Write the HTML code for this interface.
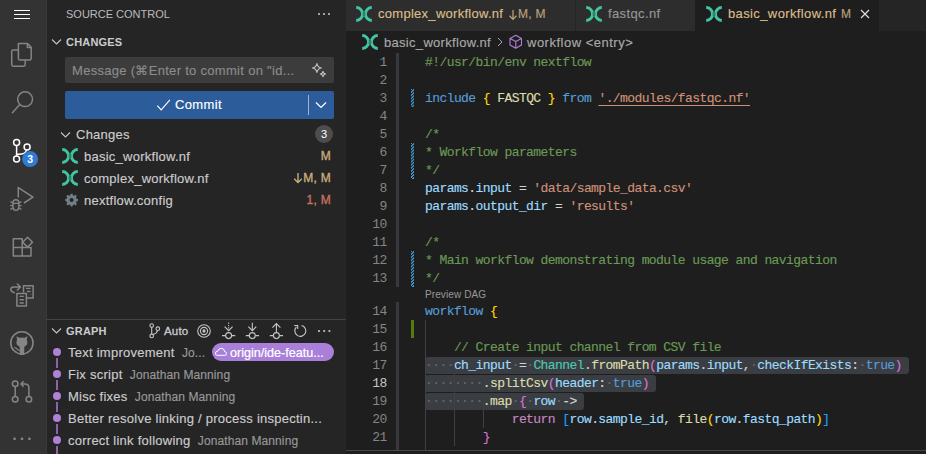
<!DOCTYPE html>
<html><head><meta charset="utf-8">
<style>
*{box-sizing:border-box;margin:0;padding:0}
html,body{width:926px;height:454px;overflow:hidden;background:#1e1e1e;font-family:"Liberation Sans",sans-serif;}
.abs{position:absolute}
#act{position:absolute;left:0;top:0;width:46px;height:454px;background:#333333}
#side{position:absolute;left:46px;top:0;width:300px;height:454px;background:#252526;border-left:1px solid #383838}
#ed{position:absolute;left:346px;top:0;width:580px;height:454px;background:#1e1e1e}
.t13{font-size:13px;letter-spacing:0.25px;color:#cccccc;white-space:nowrap;line-height:22px;-webkit-text-stroke:0.15px currentColor}
.hdr{font-size:11px;font-weight:bold;color:#cccccc;letter-spacing:0.2px;line-height:22px}
svg{position:absolute;overflow:visible}
.code{position:absolute;left:425px;font-family:"Liberation Mono",monospace;font-size:13px;letter-spacing:-0.58px;line-height:18px;white-space:pre;color:#d4d4d4;padding-top:1px;-webkit-text-stroke:0.15px currentColor}
.ln{position:absolute;left:346px;width:40.6px;text-align:right;font-family:"Liberation Mono",monospace;font-size:13px;letter-spacing:-0.6px;line-height:18px;color:#858585;padding-top:1px}
.c{color:#6a9955}.k{color:#569cd6}.s{color:#ce9178}.v{color:#9cdcfe}.f{color:#dcdcaa}.cl{color:#4ec9b0}
.b1{color:#ffd700}.b2{color:#da70d6}.b3{color:#179fff}.r{color:#c586c0}.w{color:#d4d4d4}
.dot{color:#686868}
.dec{font-size:12px;-webkit-text-stroke:0.35px currentColor;letter-spacing:0.3px}
</style></head><body>

<!-- Activity bar -->
<div id="act">
  <!-- hamburger -->
  <div class="abs" style="left:14px;top:10px;width:16px;height:1px;background:#ffffff"></div>
  <div class="abs" style="left:14px;top:14px;width:16px;height:1px;background:#ffffff"></div>
  <div class="abs" style="left:14px;top:18px;width:16px;height:1px;background:#ffffff"></div>

  <!-- files -->
  <svg style="left:0;top:0" width="46" height="454" viewBox="0 0 46 454">
   <g fill="none" stroke="#858585" stroke-width="1.5" stroke-linejoin="round">
    <path d="M18.4 43.6 H27.6 L31.2 47.2 V58.4 Q31.2 60 29.6 60 H20 Q18.4 60 18.4 58.4 Z"/>
    <path d="M27.4 43.8 V47.4 H31"/>
    <path d="M18.4 50 H13.3 Q11.7 50 11.7 51.6 V64.6 Q11.7 66.2 13.3 66.2 H23.6 Q25.2 66.2 25.2 64.6 V60"/>
    <!-- search -->
    <circle cx="25.1" cy="99.2" r="7.4"/>
    <path d="M19.8 104.6 L12.4 112.8" stroke-linecap="round"/>
    <!-- debug -->
    <path d="M18.3 197.6 V187.6 L33 197.1 L23.9 203"/>
    <path d="M12.9 203.4 Q12.9 199.8 15.9 199.8 Q18.9 199.8 18.9 203.4 V206.2 Q18.9 210.3 15.9 210.3 Q12.9 210.3 12.9 206.2 Z"/>
    <path d="M13 203.3 H18.8 M10.4 201.6 L13 203 M21.4 201.6 L18.8 203 M10.2 205.6 H13 M21.6 205.6 H18.8 M10.4 209.4 L13 208 M21.4 209.4 L18.8 208" stroke-width="1.2"/>
    <!-- extensions -->
    <path d="M13.3 238.7 H22.2 V256 H13.3 Z M13.3 247.4 H31 V256 H22.2"/>
    <path d="M27.6 237.3 L32.5 242.2 L27.6 247.1 L22.7 242.2 Z"/>
    <!-- remote docs -->
    <path d="M16.9 293.4 H26.4 V306.1 H16.9 Z"/>
    <path d="M19.6 296.4 H23.8 M19.6 299.8 H23.8 M19.6 303 H23.8" stroke-width="1.4"/>
    <path d="M23.5 292.5 V285.7 H33.1 V298 H27"/>
    <path d="M26 288.4 H30.6 M27 291.5 H30.6 M30.6 294.5 V295" stroke-width="1.4"/>
    <path d="M14.3 292.8 Q10.8 291.5 10.8 289.6 Q10.8 287 13.6 287 H20 M17.4 284 L20.4 287 L17.4 290" stroke-linecap="round"/>
    <!-- github ring -->
    <circle cx="21.9" cy="342.9" r="11.1" stroke-width="1.6"/>
    <!-- PR -->
    <circle cx="15.2" cy="383.8" r="2.8"/>
    <circle cx="15.2" cy="399.3" r="2.8"/>
    <circle cx="28.9" cy="399.3" r="2.8"/>
    <path d="M15.2 386.6 V396.5"/>
    <path d="M28.9 396.5 V388 Q28.9 384 25 384 H21.3 M23.6 381.2 L21 384 L23.6 386.8"/>
   </g>
   <!-- github cat -->
   <g fill="#858585">
    <ellipse cx="21.9" cy="342.4" rx="5.5" ry="4.9"/>
    <path d="M16.5 336.3 L17.2 341 L20.2 338.3 Z M27.3 336.3 L26.6 341 L23.6 338.3 Z"/>
    <path d="M19.7 345 H24.3 V355 H19.7 Z"/>
   </g>
   <path d="M14.4 347.3 Q16.2 347.6 17.1 349 Q18 350.4 19.8 350.3" fill="none" stroke="#858585" stroke-width="1.3"/>
   <!-- SCM active -->
   <g fill="none" stroke="#ffffff" stroke-width="1.5">
    <circle cx="16.6" cy="142.6" r="3"/>
    <circle cx="16.6" cy="159.1" r="3"/>
    <circle cx="27.1" cy="147.1" r="3"/>
    <path d="M16.6 145.6 V156.1"/>
    <path d="M26.5 150.1 Q25.5 154.2 19 154.2 H16.6"/>
   </g>
   <circle cx="30.1" cy="159.1" r="8" fill="#2f7bd4"/>
   <text x="30.1" y="162.9" text-anchor="middle" font-family="Liberation Sans" font-weight="bold" font-size="10.5" fill="#fff">3</text>
   <!-- more -->
   <circle cx="14.6" cy="438.8" r="1.4" fill="#858585"/>
   <circle cx="22" cy="438.8" r="1.4" fill="#858585"/>
   <circle cx="29.4" cy="438.8" r="1.4" fill="#858585"/>
  </svg>
</div>

<!-- Sidebar -->
<div id="side"></div>
<div class="abs" style="left:66px;top:3px;font-size:11px;color:#bbbbbb;line-height:22px;letter-spacing:0px">SOURCE CONTROL</div>
<div class="abs" style="left:317px;top:13px;width:16px;height:3px">
  <div class="abs" style="left:1px;top:0;width:2px;height:2px;background:#ccc;border-radius:1px"></div>
  <div class="abs" style="left:6px;top:0;width:2px;height:2px;background:#ccc;border-radius:1px"></div>
  <div class="abs" style="left:11px;top:0;width:2px;height:2px;background:#ccc;border-radius:1px"></div>
</div>
<!-- CHANGES header -->
<svg style="left:51px;top:38px" width="11" height="8" viewBox="0 0 11 8"><path d="M1 1.5 L5.5 6 L10 1.5" fill="none" stroke="#c5c5c5" stroke-width="1.1"/></svg>
<div class="abs hdr" style="left:66px;top:31px">CHANGES</div>

<!-- input -->
<div class="abs" style="left:65px;top:57px;width:269px;height:26px;background:#3c3c3c;border-radius:2px"></div>
<div class="abs t13" style="left:72px;top:60px;color:#8b8b8b;letter-spacing:0.3px">Message (⌘Enter to commit on "id...</div>

<!-- commit button -->
<div class="abs" style="left:65px;top:91px;width:269px;height:28px;background:#2c5d9a;border-radius:2px"></div>
<svg style="left:156px;top:98px" width="16" height="14" viewBox="0 0 16 14"><path d="M1.3 7.6 L5.2 11.9 L13.9 1.9" fill="none" stroke="#ffffff" stroke-width="1.1"/></svg>
<div class="abs t13" style="left:175px;top:94px;color:#ffffff;font-size:13px;-webkit-text-stroke:0.15px #fff;letter-spacing:0.35px">Commit</div>
<div class="abs" style="left:308px;top:95px;width:1px;height:20px;background:#9fb4d0"></div>
<svg style="left:315px;top:101px" width="12" height="8" viewBox="0 0 12 8"><path d="M1 1.5 L6 6.5 L11 1.5" fill="none" stroke="#ffffff" stroke-width="1.2"/></svg>

<!-- Changes row -->
<svg style="left:60px;top:131px" width="11" height="8" viewBox="0 0 11 8"><path d="M1 1.5 L5.5 6 L10 1.5" fill="none" stroke="#c5c5c5" stroke-width="1.1"/></svg>
<div class="abs t13" style="left:76px;top:124px">Changes</div>
<div class="abs" style="left:315px;top:125px;width:18px;height:18px;border-radius:9px;background:#4d4d4d;color:#fff;font-size:11px;line-height:18px;text-align:center">3</div>

<!-- file rows -->
<div class="abs t13" style="left:84px;top:146px">basic_workflow.nf</div>
<div class="abs t13" style="left:84px;top:168px">complex_workflow.nf</div>
<div class="abs t13" style="left:84px;top:190px">nextflow.config</div>
<div class="abs t13 dec" style="left:300px;top:145px;width:31px;text-align:right;color:#c9ac7a">M</div>
<div class="abs t13 dec" style="left:270px;top:167px;width:61px;text-align:right;color:#c9ac7a">M, M</div>
<svg style="left:293px;top:172px" width="10" height="12" viewBox="0 0 10 12"><path d="M5 1 V10.5 M1.2 6.8 L5 10.6 L8.8 6.8" fill="none" stroke="#c9ac7a" stroke-width="1.4"/></svg>
<div class="abs t13 dec" style="left:270px;top:189px;width:61px;text-align:right;color:#c8705f">1, M</div>

<svg style="left:62px;top:148px" width="16" height="16" viewBox="0 0 16 16"><path d="M0.2 1.6 A6.4 6.4 0 0 1 0.2 14.4 M15.8 1.6 A6.4 6.4 0 0 0 15.8 14.4" fill="none" stroke="#42c6a2" stroke-width="3"/><rect x="6.6" y="6.2" width="2.8" height="3.6" fill="#202020" opacity="0.4"/></svg>
<svg style="left:62px;top:170px" width="16" height="16" viewBox="0 0 16 16"><path d="M0.2 1.6 A6.4 6.4 0 0 1 0.2 14.4 M15.8 1.6 A6.4 6.4 0 0 0 15.8 14.4" fill="none" stroke="#42c6a2" stroke-width="3"/><rect x="6.6" y="6.2" width="2.8" height="3.6" fill="#202020" opacity="0.4"/></svg>
<svg style="left:64px;top:192px" width="16" height="16" viewBox="0 0 16 16"><g transform="translate(7.6 8.1)"><path fill="#6e7f86" fill-rule="evenodd" d="M-1 -5.6 H1 L1.3 -4.1 L2.6 -3.6 L3.9 -4.5 L5.3 -3.1 L4.4 -1.8 L4.9 -0.5 L6.4 -0.2 V1.8 L4.9 2.1 L4.4 3.4 L5.3 4.7 L3.9 6.1 L2.6 5.2 L1.3 5.7 L1 7.2 H-1 L-1.3 5.7 L-2.6 5.2 L-3.9 6.1 L-5.3 4.7 L-4.4 3.4 L-4.9 2.1 L-6.4 1.8 V-0.2 L-4.9 -0.5 L-4.4 -1.8 L-5.3 -3.1 L-3.9 -4.5 L-2.6 -3.6 L-1.3 -4.1 Z M0 -1.2 A2 2 0 1 0 0.01 -1.2 Z" transform="translate(0 -0.8)"/></g></svg>
<svg style="left:306px;top:58px" width="26" height="26" viewBox="0 0 26 26"><g fill="none" stroke="#c5c5c5" stroke-width="1.1" stroke-linejoin="round"><path d="M10.9 5.6 Q11.6 9.3 15.3 10 Q11.6 10.7 10.9 14.4 Q10.2 10.7 6.5 10 Q10.2 9.3 10.9 5.6 Z"/><path d="M17 13.4 Q17.4 15.6 19.6 16 Q17.4 16.4 17 18.6 Q16.6 16.4 14.4 16 Q16.6 15.6 17 13.4 Z"/></g></svg>
<svg style="left:140px;top:318px" width="200" height="26" viewBox="140 318 200 26"><g fill="none" stroke="#c5c5c5" stroke-width="1.1">
   <circle cx="151.7" cy="325.6" r="1.8"/><circle cx="151.7" cy="335.9" r="1.8"/><circle cx="157.8" cy="328.7" r="1.8"/>
   <path d="M151.7 327.4 V334.1 M157.6 330.5 Q157 333.2 153 334.6"/>
   <circle cx="204" cy="331" r="6.3"/><circle cx="204" cy="331" r="3.6"/><circle cx="204" cy="331" r="1.1" fill="#c5c5c5"/>
   <path d="M228.6 322.5 V331" stroke-dasharray="1.2 1.2"/><path d="M224.6 326.6 L228.6 330.6 L232.6 326.6"/>
   <circle cx="228.6" cy="335.6" r="3"/><path d="M222 335.6 H225.6 M231.6 335.6 H235.2"/>
   <path d="M252.3 322.8 V331"/><path d="M248.3 326.6 L252.3 330.6 L256.3 326.6"/>
   <circle cx="252.3" cy="335.6" r="3"/><path d="M245.8 335.6 H249.3 M255.3 335.6 H259"/>
   <path d="M276.4 323.6 V332.4"/><path d="M272.4 327.6 L276.4 323.6 L280.4 327.6"/>
   <circle cx="276.4" cy="335.6" r="3"/><path d="M269.8 335.6 H273.4 M279.4 335.6 H283"/>
   <path d="M301.6 325.5 A5.5 5.5 0 1 1 296.4 327"/><path d="M294.2 325.5 H297.7 V329"/>
  </g>
  <circle cx="319" cy="331" r="1.1" fill="#c5c5c5"/><circle cx="324.2" cy="331" r="1.1" fill="#c5c5c5"/><circle cx="329.4" cy="331" r="1.1" fill="#c5c5c5"/>
 </svg>
<!-- graph separator -->
<div class="abs" style="left:46px;top:319px;width:300px;height:1px;background:#434343"></div>
<svg style="left:51px;top:327px" width="11" height="8" viewBox="0 0 11 8"><path d="M1 1.5 L5.5 6 L10 1.5" fill="none" stroke="#c5c5c5" stroke-width="1.1"/></svg>
<div class="abs hdr" style="left:66px;top:320px">GRAPH</div>
<div class="abs t13" style="left:164px;top:320px;font-size:11.5px;-webkit-text-stroke:0.3px #ccc;letter-spacing:0.2px">Auto</div>

<!-- graph rows -->
<div class="abs" style="left:56px;top:358px;width:2px;height:10px;background:#8a63ad"></div><div class="abs" style="left:56px;top:380px;width:2px;height:10px;background:#8a63ad"></div><div class="abs" style="left:56px;top:402px;width:2px;height:10px;background:#8a63ad"></div><div class="abs" style="left:56px;top:424px;width:2px;height:10px;background:#8a63ad"></div><div class="abs" style="left:56px;top:446px;width:2px;height:10px;background:#8a63ad"></div>
<div class="abs" style="left:53px;top:348px;width:8px;height:8px;border-radius:4px;background:#b180d7"></div>
<div class="abs" style="left:53px;top:370px;width:8px;height:8px;border-radius:4px;background:#b180d7"></div>
<div class="abs" style="left:53px;top:392px;width:8px;height:8px;border-radius:4px;background:#b180d7"></div>
<div class="abs" style="left:53px;top:414px;width:8px;height:8px;border-radius:4px;background:#b180d7"></div>
<div class="abs" style="left:53px;top:436px;width:8px;height:8px;border-radius:4px;background:#b180d7"></div>
<div class="abs t13" style="left:68px;top:342px">Text improvement <span style="font-size:12px;color:#999;letter-spacing:0.1px">&nbsp;Jo...</span></div>
<div class="abs t13" style="left:68px;top:364px">Fix script <span style="font-size:12px;color:#999;letter-spacing:0.1px">&nbsp;Jonathan Manning</span></div>
<div class="abs t13" style="left:68px;top:386px">Misc fixes <span style="font-size:12px;color:#999;letter-spacing:0.1px">&nbsp;Jonathan Manning</span></div>
<div class="abs t13" style="left:68px;top:408px">Better resolve linking / process inspectin...</div>
<div class="abs t13" style="left:68px;top:430px">correct link following <span style="font-size:12px;color:#999;letter-spacing:0.1px">&nbsp;Jonathan Manning</span></div>
<div class="abs" style="left:212px;top:343px;width:122px;height:18px;border-radius:9px;background:#a97fd9"></div>
<svg style="left:214px;top:346px" width="14" height="11" viewBox="0 0 14 11"><path d="M3.2 9.3 H10.8 Q12.6 9.3 12.6 7.5 Q12.6 5.8 10.6 5.6 Q10.4 2.3 7.2 2.3 Q4.5 2.3 3.9 5 Q1.4 5.3 1.4 7.3 Q1.4 9.3 3.2 9.3 Z" fill="none" stroke="#fff" stroke-width="1"/></svg>
<div class="abs t13" style="left:230px;top:342px;color:#fff;font-size:12.6px;letter-spacing:0px;-webkit-text-stroke:0.2px #fff">origin/ide-featu...</div>

<!-- Editor -->
<div id="ed"></div>
<div class="abs" style="left:346px;top:0;width:580px;height:31px;background:#252526"></div>
<div class="abs" style="left:346px;top:0;width:229px;height:31px;background:#2d2d2d"></div>
<div class="abs" style="left:576px;top:0;width:119px;height:31px;background:#2d2d2d"></div>
<div class="abs" style="left:695px;top:0;width:184px;height:31px;background:#1e1e1e"></div>
<div class="abs t13" style="left:378px;top:3px;color:#d9bd8a;letter-spacing:0.28px">complex_workflow.nf</div>
<svg style="left:508px;top:9px" width="10" height="12" viewBox="0 0 10 12"><path d="M5 1 V10.3 M1.5 6.8 L5 10.4 L8.5 6.8" fill="none" stroke="#b89f75" stroke-width="1.3"/></svg>
<div class="abs t13 dec" style="left:518px;top:3px;color:#b89f75;-webkit-text-stroke:0.2px currentColor">M, M</div>
<div class="abs t13" style="left:608px;top:3px;color:#969696;letter-spacing:0.38px">fastqc.nf</div>
<div class="abs t13" style="left:728px;top:3px;color:#d9bd8a;letter-spacing:0.38px">basic_workflow.nf</div>
<div class="abs t13 dec" style="left:841px;top:3px;color:#b89f75;-webkit-text-stroke:0.2px currentColor">M</div>
<svg style="left:860px;top:9px" width="10" height="10" viewBox="0 0 10 10"><path d="M1 1L9 9M9 1L1 9" stroke="#ddd" stroke-width="1.2"/></svg>

<svg style="left:356px;top:6px" width="16" height="16" viewBox="0 0 16 16"><path d="M0.2 1.6 A6.4 6.4 0 0 1 0.2 14.4 M15.8 1.6 A6.4 6.4 0 0 0 15.8 14.4" fill="none" stroke="#42c6a2" stroke-width="3"/><rect x="6.6" y="6.2" width="2.8" height="3.6" fill="#202020" opacity="0.4"/></svg>
<svg style="left:586px;top:6px" width="16" height="16" viewBox="0 0 16 16"><path d="M0.2 1.6 A6.4 6.4 0 0 1 0.2 14.4 M15.8 1.6 A6.4 6.4 0 0 0 15.8 14.4" fill="none" stroke="#42c6a2" stroke-width="3"/><rect x="6.6" y="6.2" width="2.8" height="3.6" fill="#202020" opacity="0.4"/></svg>
<svg style="left:706px;top:6px" width="16" height="16" viewBox="0 0 16 16"><path d="M0.2 1.6 A6.4 6.4 0 0 1 0.2 14.4 M15.8 1.6 A6.4 6.4 0 0 0 15.8 14.4" fill="none" stroke="#42c6a2" stroke-width="3"/><rect x="6.6" y="6.2" width="2.8" height="3.6" fill="#202020" opacity="0.4"/></svg>
<svg style="left:362px;top:34px" width="16" height="16" viewBox="0 0 16 16"><path d="M0.2 1.6 A6.4 6.4 0 0 1 0.2 14.4 M15.8 1.6 A6.4 6.4 0 0 0 15.8 14.4" fill="none" stroke="#42c6a2" stroke-width="3"/><rect x="6.6" y="6.2" width="2.8" height="3.6" fill="#202020" opacity="0.4"/></svg>
<svg style="left:505px;top:32px" width="20" height="20" viewBox="505 32 20 20"><g fill="none" stroke="#b180d7" stroke-width="1.1" stroke-linejoin="round"><path d="M515.8 35.3 L521.5 38.6 V45 L515.8 48.3 L510 45 V38.6 Z"/><path d="M510 38.6 L515.8 41.6 L521.5 38.6 M515.8 41.6 V48.3"/></g></svg>
<!-- breadcrumbs -->
<div class="abs t13" style="left:384px;top:32px;color:#a9a9a9;letter-spacing:0.3px">basic_workflow.nf</div>
<svg style="left:497px;top:37px" width="6" height="10" viewBox="0 0 6 10"><path d="M1 1L5 5L1 9" fill="none" stroke="#a9a9a9" stroke-width="1"/></svg>
<div class="abs t13" style="left:527px;top:32px;color:#a9a9a9;letter-spacing:0.5px">workflow &lt;entry&gt;</div>

<!-- line numbers -->
<!-- GUTTER -->
<div class="abs" style="left:396px;top:53px;width:3px;height:234px;background:#39393d"></div>
<div class="abs" style="left:396px;top:302px;width:3px;height:148px;background:#39393d"></div>
<div class="abs" style="left:411px;top:89px;width:3px;height:18px;background:repeating-linear-gradient(135deg,#3d95cc 0px,#3d95cc 1.1px,#1e1e1e 1.4px,#1e1e1e 1.9px,#3d95cc 2.15px)"></div>
<div class="abs" style="left:411px;top:143px;width:3px;height:36px;background:repeating-linear-gradient(135deg,#3d95cc 0px,#3d95cc 1.1px,#1e1e1e 1.4px,#1e1e1e 1.9px,#3d95cc 2.15px)"></div>
<div class="abs" style="left:411px;top:251px;width:3px;height:36px;background:repeating-linear-gradient(135deg,#3d95cc 0px,#3d95cc 1.1px,#1e1e1e 1.4px,#1e1e1e 1.9px,#3d95cc 2.15px)"></div>
<div class="abs" style="left:411px;top:320px;width:3px;height:18px;background:#587c0c"></div>
<div class="abs" style="left:425px;top:357px;width:484px;height:17px;background:#3a3d41;border-radius:3px"></div>
<div class="abs" style="left:425px;top:375px;width:231px;height:17px;background:#3a3d41;border-radius:3px"></div>
<div class="abs" style="left:425px;top:393px;width:159px;height:17px;background:#3a3d41;border-radius:3px"></div>
<div class="abs" style="left:425px;top:320px;width:1px;height:144px;background:#404040"></div>
<div class="abs" style="left:454px;top:374px;width:1px;height:72px;background:#404040"></div>
<div class="abs" style="left:483px;top:410px;width:1px;height:18px;background:#404040"></div>
<div class="abs" style="left:425px;top:287px;font-size:10px;line-height:15px;color:#999999;letter-spacing:0.1px">Preview DAG</div>
<!-- /GUTTER -->
<!-- CODEGEN -->
<div class="ln" style="top:53px;color:#858585">1</div>
<div class="ln" style="top:71px;color:#858585">2</div>
<div class="ln" style="top:89px;color:#858585">3</div>
<div class="ln" style="top:107px;color:#858585">4</div>
<div class="ln" style="top:125px;color:#858585">5</div>
<div class="ln" style="top:143px;color:#858585">6</div>
<div class="ln" style="top:161px;color:#858585">7</div>
<div class="ln" style="top:179px;color:#858585">8</div>
<div class="ln" style="top:197px;color:#858585">9</div>
<div class="ln" style="top:215px;color:#858585">10</div>
<div class="ln" style="top:233px;color:#858585">11</div>
<div class="ln" style="top:251px;color:#858585">12</div>
<div class="ln" style="top:269px;color:#858585">13</div>
<div class="ln" style="top:302px;color:#858585">14</div>
<div class="ln" style="top:320px;color:#858585">15</div>
<div class="ln" style="top:338px;color:#858585">16</div>
<div class="ln" style="top:356px;color:#858585">17</div>
<div class="ln" style="top:374px;color:#c6c6c6">18</div>
<div class="ln" style="top:392px;color:#858585">19</div>
<div class="ln" style="top:410px;color:#858585">20</div>
<div class="ln" style="top:428px;color:#858585">21</div>
<div class="ln" style="top:446px;color:#858585">22</div>
<div class="code" style="top:53px"><span class="c">#!/usr/bin/env nextflow</span></div>
<div class="code" style="top:89px"><span class="k">include</span> <span class="b1">{</span> <span class="f">FASTQC</span> <span class="b1">}</span> <span class="k">from</span> <span class="s" style="text-decoration:underline;text-underline-offset:3px">'./modules/fastqc.nf'</span></div>
<div class="code" style="top:125px"><span class="c">/*</span></div>
<div class="code" style="top:143px"><span class="c">* Workflow parameters</span></div>
<div class="code" style="top:161px"><span class="c">*/</span></div>
<div class="code" style="top:179px"><span class="v">params</span>.<span class="v">input</span> = <span class="s">'data/sample_data.csv'</span></div>
<div class="code" style="top:197px"><span class="v">params</span>.<span class="v">output_dir</span> = <span class="s">'results'</span></div>
<div class="code" style="top:233px"><span class="c">/*</span></div>
<div class="code" style="top:251px"><span class="c">* Main workflow demonstrating module usage and navigation</span></div>
<div class="code" style="top:269px"><span class="c">*/</span></div>
<div class="code" style="top:302px"><span class="k">workflow</span> <span class="b1">{</span></div>
<div class="code" style="top:338px">    <span class="c">// Create input channel from CSV file</span></div>
<div class="code" style="top:356px"><span class="dot">····</span><span class="v">ch_input</span><span class="dot">·</span>=<span class="dot">·</span><span class="cl">Channel</span>.<span class="f">fromPath</span><span class="b2">(</span><span class="v">params</span>.<span class="v">input</span>,<span class="dot">·</span><span class="v">checkIfExists</span>:<span class="dot">·</span><span class="k">true</span><span class="b2">)</span></div>
<div class="code" style="top:374px"><span class="dot">········</span>.<span class="f">splitCsv</span><span class="b2">(</span><span class="v">header</span>:<span class="dot">·</span><span class="k">true</span><span class="b2">)</span></div>
<div class="code" style="top:392px"><span class="dot">········</span>.<span class="f">map</span><span class="dot">·</span><span class="b2">{</span><span class="dot">·</span><span class="v">row</span><span class="dot">·</span>-&gt;</div>
<div class="code" style="top:410px">            <span class="r">return</span> <span class="b3">[</span><span class="v">row</span>.<span class="v">sample_id</span>, <span class="f">file</span><span class="b1">(</span><span class="v">row</span>.<span class="v">fastq_path</span><span class="b1">)</span><span class="b3">]</span></div>
<div class="code" style="top:428px">        <span class="b2">}</span></div>
<!-- /CODEGEN -->

<!-- BOTTOM -->
<div class="abs" style="left:346px;top:450px;width:580px;height:1px;background:#474747"></div>
<div class="abs" style="left:346px;top:451px;width:580px;height:3px;background:#1e1e1e"></div>
</body></html>
